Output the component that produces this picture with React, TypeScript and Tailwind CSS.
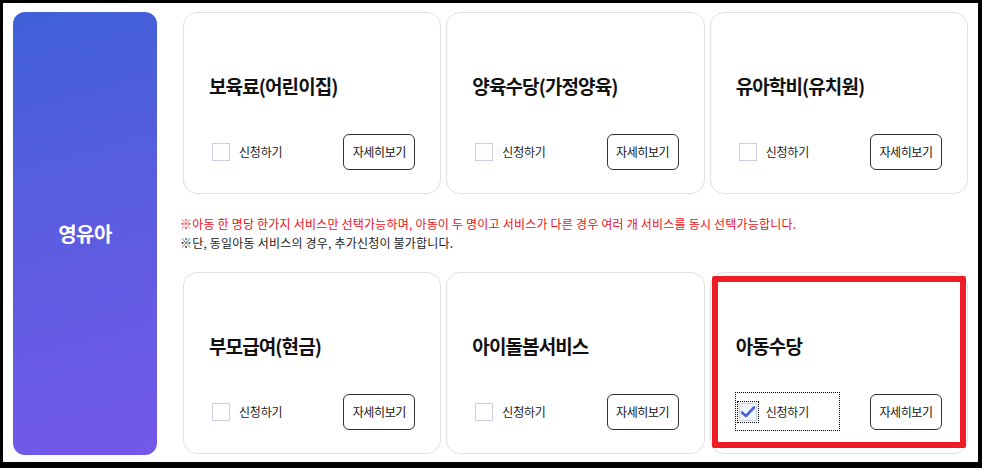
import React from "react";

const FONT = { fontFamily: '"Noto Sans CJK KR", "Noto Sans", sans-serif' };

type Service = { title: string; checked?: boolean; marked?: boolean };

const topRow: Service[] = [
  { title: "보육료(어린이집)" },
  { title: "양육수당(가정양육)" },
  { title: "유아학비(유치원)" },
];

const bottomRow: Service[] = [
  { title: "부모급여(현금)" },
  { title: "아이돌봄서비스" },
  { title: "아동수당", checked: true, marked: true },
];

function CheckBox({ checked }: { checked?: boolean }) {
  return (
    <span
      className={
        "flex h-[18px] w-[18px] items-center justify-center border " +
        (checked
          ? "border-[#c9cfe6] bg-[#f3f5fc] outline-1 outline-dotted outline-black outline-offset-[1px]"
          : "border-[#c9cfe6] bg-white")
      }
    >
      {checked && (
        <svg width="16" height="14" viewBox="0 0 16 14" fill="none">
          <path d="M2 7.5 L6 11 L14 2.5" stroke="#4a62d9" strokeWidth="2.6" strokeLinecap="round" strokeLinejoin="round" />
        </svg>
      )}
    </span>
  );
}

function ServiceCard({ s }: { s: Service }) {
  return (
    <div className="relative h-[182px] rounded-[14px] border border-[#e0e0e0] bg-white px-[25px] pt-[61px]">
      <h3 className="h-[24px] text-[19px] font-bold leading-[24px] tracking-[-0.9px] text-[#111]">{s.title}</h3>
      <div className="mt-[35px] flex items-center justify-between">
        <label
          className={
            "flex h-[37px] items-center gap-[9px] pl-[3px] text-[12px] text-[#222] " +
            (s.checked ? "w-[103px] outline-1 outline-dotted outline-black" : "")
          }
        >
          <CheckBox checked={s.checked} />
          <span className="tracking-[-0.2px]">신청하기</span>
        </label>
        <button className="h-[36px] w-[72px] rounded-[6px] border border-[#333] bg-white text-[12px] tracking-[-0.4px] text-[#111]">
          자세히보기
        </button>
      </div>
      {s.marked && (
        <div className="pointer-events-none absolute left-[1px] right-[1px] top-[3px] bottom-[5px] rounded-[2px] border-[6px] border-[#ee1c25]" />
      )}
    </div>
  );
}

export default function App() {
  return (
    <div className="h-[468px] w-[982px] bg-black pl-[3px] pr-[4px] pt-[3px] pb-[6px]" style={FONT}>
      <div className="flex h-full w-full gap-[26px] bg-white pl-[10px] pr-[10px] pt-[9px]">
        <div className="flex h-[443px] w-[144px] shrink-0 items-center justify-center rounded-[12px] bg-linear-165 from-[#3f60d7] to-[#7458ea]">
          <span className="text-[20px] font-bold tracking-[-0.5px] text-white">영유아</span>
        </div>
        <div className="flex flex-1 flex-col">
          <div className="grid grid-cols-3 gap-[5px]">
            {topRow.map((s) => (
              <ServiceCard key={s.title} s={s} />
            ))}
          </div>
          <div className="-ml-[3px] mt-[20px] mb-[20px] text-[12px] leading-[19px] tracking-[0.2px]">
            <p className="text-[#e8101c]">
              ※아동 한 명당 한가지 서비스만 선택가능하며, 아동이 두 명이고 서비스가 다른 경우 여러 개 서비스를 동시 선택가능합니다.
            </p>
            <p className="text-[#222]">※단, 동일아동 서비스의 경우, 추가신청이 불가합니다.</p>
          </div>
          <div className="grid grid-cols-3 gap-[5px]">
            {bottomRow.map((s) => (
              <ServiceCard key={s.title} s={s} />
            ))}
          </div>
        </div>
      </div>
    </div>
  );
}
